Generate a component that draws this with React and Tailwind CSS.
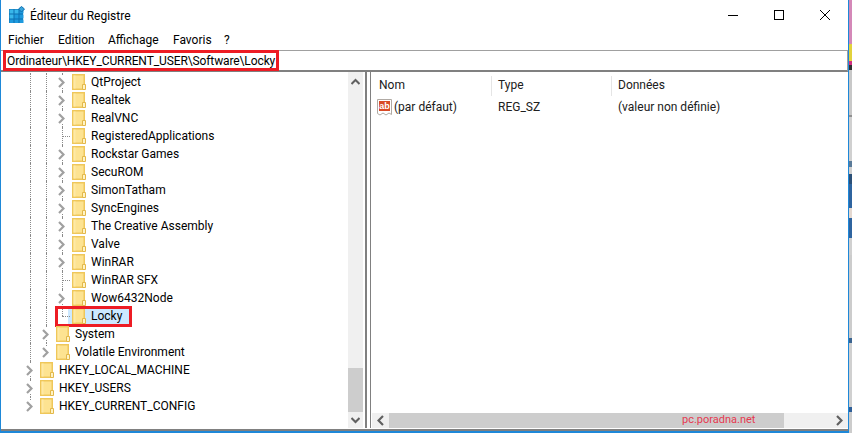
import React from 'react'

const rows = [
  { label: 'QtProject', depth: 2, arrow: true },
  { label: 'Realtek', depth: 2, arrow: true },
  { label: 'RealVNC', depth: 2, arrow: true },
  { label: 'RegisteredApplications', depth: 2 },
  { label: 'Rockstar Games', depth: 2, arrow: true },
  { label: 'SecuROM', depth: 2, arrow: true },
  { label: 'SimonTatham', depth: 2, arrow: true },
  { label: 'SyncEngines', depth: 2, arrow: true },
  { label: 'The Creative Assembly', depth: 2, arrow: true },
  { label: 'Valve', depth: 2, arrow: true },
  { label: 'WinRAR', depth: 2, arrow: true },
  { label: 'WinRAR SFX', depth: 2 },
  { label: 'Wow6432Node', depth: 2, arrow: true },
  { label: 'Locky', depth: 2, selected: true, last: true },
  { label: 'System', depth: 1, arrow: true },
  { label: 'Volatile Environment', depth: 1, arrow: true, last: true },
  { label: 'HKEY_LOCAL_MACHINE', depth: 0, arrow: true },
  { label: 'HKEY_USERS', depth: 0, arrow: true },
  { label: 'HKEY_CURRENT_CONFIG', depth: 0, arrow: true, last: true },
]

const sliver = [
  ['h-[45px]', 'bg-[#d488b8]'],
  ['h-[17px]', 'bg-[#e2d23c]'],
  ['h-[5px]', 'bg-[#d03080]'],
  ['h-[5px]', 'bg-[#303030]'],
  ['h-[46px]', 'bg-[#c8c8c8]'],
  ['h-[2px]', 'bg-[#909090]'],
  ['h-[45px]', 'bg-[#d0d0d0]'],
  ['h-[6px]', 'bg-[#5a7a98]'],
  ['h-[7px]', 'bg-[#d0d0d0]'],
  ['h-[10px]', 'bg-[#2c5078]'],
  ['h-[25px]', 'bg-[#2f649f]'],
  ['h-[10px]', 'bg-[#e4d8d0]'],
  ['h-[20px]', 'bg-[#2f649f]'],
  ['h-[18px]', 'bg-[#d0d0d0]'],
  ['h-[85px]', 'bg-[#cccccc]'],
  ['h-[5px]', 'bg-[#3a6490]'],
  ['h-[65px]', 'bg-[#d0d0d0]'],
  ['h-[6px]', 'bg-[#2f5f98]'],
  ['h-[21px]', 'bg-[#cccccc]'],
]

function RegeditIcon () {
  const cells = [0, 5, 10]
  return (
    <svg width="16" height="17" viewBox="0 0 16 17" className="shrink-0">
      <rect x="0" y="3" width="14" height="14" fill="#0d6fb0" />
      {cells.map((y) => cells.map((x) => (
        <rect key={`${x}-${y}`} x={x + 0.5} y={y + 3.5} width="4" height="4" fill={x + y < 10 ? '#38b6ea' : '#1e9ade'} />
      )))}
      <path d="M12.5 0.5 L15.5 3 L12.5 6 L9.5 3 Z" fill="#38a4dc" stroke="#0d6fb0" />
    </svg>
  )
}

function Folder () {
  return (
    <svg width="14" height="16" viewBox="0 0 14 16" className="shrink-0">
      <rect x="0.75" y="0.75" width="11.5" height="14.5" fill="#fde391" stroke="#efc75a" strokeWidth="1.5" />
      <rect x="1.5" y="1.5" width="2" height="13" fill="#fee9a6" />
      <path d="M10.5 10.5 H13.5 V15.5 H10.5 Z" fill="#fff3c4" stroke="#e3b84a" />
    </svg>
  )
}

function Chevron ({ className = 'text-[#a0a0a0]', flip = false }) {
  return (
    <svg width="7" height="11" viewBox="0 0 7 11" fill="none" stroke="currentColor" strokeWidth="2.2" className={className}>
      <path d={flip ? 'M6 1 L1.5 5.5 L6 10' : 'M1 1 L5.5 5.5 L1 10'} />
    </svg>
  )
}

function Caret ({ down = false }) {
  return (
    <svg width="9" height="7" viewBox="0 0 9 7" fill="none" stroke="#606060" strokeWidth="2">
      <path d={down ? 'M0.5 1 L4.5 5 L8.5 1' : 'M0.5 6 L4.5 2 L8.5 6'} />
    </svg>
  )
}

function Guide ({ half = false }) {
  return (
    <div className="w-4 shrink-0">
      <div className={`ml-2 border-l border-dotted border-[#8a8a8a] ${half ? 'h-1/2' : 'h-full'}`} />
    </div>
  )
}

function TreeRow ({ label, depth, arrow, selected, last }) {
  return (
    <div className="relative flex h-[18px] pl-[21px] text-[12px] text-black">
      {depth > 0 && <Guide />}
      {depth > 1 && <Guide />}
      <div className="relative w-4 shrink-0">
        <div className={`ml-2 border-l border-dotted border-[#8a8a8a] ${last ? 'h-1/2' : 'h-full'}`} />
        {arrow ? (
          <div className="absolute left-[3px] top-[3px] flex h-[12px] w-[9px] items-center justify-center bg-white">
            <Chevron />
          </div>
        ) : (
          <div className="absolute left-2 top-[9px] w-2 border-t border-dotted border-[#8a8a8a]" />
        )}
      </div>
      <div className={`flex items-center ${selected ? '-ml-[2px] w-[62px] bg-[#cce8ff] pl-1' : 'ml-[2px]'}`}>
        <Folder />
        <span className="ml-[5px] whitespace-nowrap">{label}</span>
      </div>
      {selected && <div className="absolute left-[54px] top-[-1px] h-[21px] w-[77px] border-[3px] border-[#ed1c24]" />}
    </div>
  )
}

export default function App () {
  return (
    <div className="flex h-[433px] w-[852px] overflow-hidden bg-white font-['Roboto',sans-serif]">
      <div className="flex h-[433px] w-[849px] shrink-0 flex-col border-b-2 border-l border-r border-[#1e88d8]">
        {/* Title bar */}
        <div className="flex h-[30px] shrink-0 items-center">
          <div className="ml-[8px] mt-[-2px]"><RegeditIcon /></div>
          <span className="ml-[5px] mt-px text-[12px] text-black">Éditeur du Registre</span>
          <div className="ml-auto flex h-full">
            <div className="flex w-[46px] items-center justify-center"><div className="h-px w-[10px] bg-black" /></div>
            <div className="flex w-[46px] items-center justify-center"><div className="h-[10px] w-[10px] border border-black" /></div>
            <div className="flex w-[46px] items-center justify-center">
              <svg width="10" height="10" viewBox="0 0 10 10" stroke="#000" strokeWidth="1"><path d="M0 0 L10 10 M10 0 L0 10" /></svg>
            </div>
          </div>
        </div>

        {/* Menu */}
        <div className="flex h-[20px] shrink-0 items-center pl-[7px] text-[12px] text-black">
          <span className="w-[50px]">Fichier</span>
          <span className="w-[50px]">Edition</span>
          <span className="w-[65px]">Affichage</span>
          <span className="w-[51px]">Favoris</span>
          <span>?</span>
        </div>

        {/* Address */}
        <div className="flex h-[22px] shrink-0 border-b-2 border-r border-t border-b-[#808080] border-r-[#a0a0a0] border-t-[#a0a0a0]">
          <div className="z-10 ml-[2px] flex h-[21px] w-[276px] shrink-0 items-center border-[3px] border-[#ed1c24] pl-px text-[12px] tracking-[-0.11px] text-black -mt-px">
            <span className="whitespace-nowrap">Ordinateur\HKEY_CURRENT_USER\Software\Locky</span>
          </div>
        </div>

        {/* Panes */}
        <div className="flex min-h-0 flex-1 border-b-2 border-[#808080] pb-px">
          <div className="flex w-[366px] shrink-0 border-r-2 border-[#808080] pr-[2px]">
            <div className="min-w-0 flex-1 pt-px">
              {rows.map((r) => <TreeRow key={r.label} {...r} />)}
            </div>
            <div className="flex w-[15px] shrink-0 flex-col bg-[#f0f0f0] pt-px">
              <div className="flex h-[16px] items-center justify-center"><Caret /></div>
              <div className="flex-1" />
              <div className="h-[44px] bg-[#cdcdcd]" />
              <div className="flex h-[16px] items-center justify-center"><Caret down /></div>
            </div>
          </div>
          <div className="w-[3px] shrink-0" />
          <div className="flex min-w-0 flex-1 flex-col border-l border-[#808080] pl-px">
            <div className="flex h-[25px] shrink-0 text-[12px] text-[#202020]">
              <div className="flex w-[120px] items-center pl-[7px]"><span className="flex-1">Nom</span><div className="mt-[2px] h-[20px] w-px bg-[#e5e5e5]" /></div>
              <div className="flex w-[120px] items-center pl-[6px]"><span className="flex-1">Type</span><div className="mt-[2px] h-[20px] w-px bg-[#e5e5e5]" /></div>
              <div className="flex items-center pl-[6px]"><span>Données</span></div>
            </div>
            <div className="flex h-[20px] shrink-0 items-center text-[12px] text-[#202020]">
              <div className="flex w-[120px] items-center pl-[5px]">
                <svg width="15" height="17" viewBox="0 0 15 17" className="shrink-0">
                  <path d="M0.5 0.5 H14.5 V15.5 L12 14 L9 16 L6 14 L3 16 L0.5 14.5 Z" fill="#fff" stroke="#b0aaa4" />
                  <rect x="2" y="2" width="11" height="10" fill="#d84a26" />
                  <text x="7.5" y="10" textAnchor="middle" fontSize="9" fontWeight="700" fill="#fff" fontFamily="'Liberation Sans', sans-serif">ab</text>
                </svg>
                <span className="ml-[2px] whitespace-nowrap">(par défaut)</span>
              </div>
              <div className="w-[120px] pl-[6px]">REG_SZ</div>
              <div className="pl-[6px]">(valeur non définie)</div>
            </div>
            <div className="flex-1" />
            <div className="relative flex h-[15px] shrink-0 bg-[#f0f0f0]">
              <div className="flex w-[17px] items-center justify-center"><Chevron className="text-[#606060]" flip /></div>
              <div className="w-[395px] bg-[#cdcdcd]" />
              <div className="ml-auto flex w-[17px] items-center justify-center"><Chevron className="text-[#606060]" /></div>
              <span className="absolute left-[310px] top-0 text-[11px] leading-[14px] text-[#e63950]">pc.poradna.net</span>
            </div>
          </div>
        </div>
      </div>

      {/* Desktop behind the window */}
      <div className="flex w-[3px] shrink-0 flex-col">
        {sliver.map(([h, c], i) => <div key={i} className={`${h} ${c}`} />)}
      </div>
    </div>
  )
}
